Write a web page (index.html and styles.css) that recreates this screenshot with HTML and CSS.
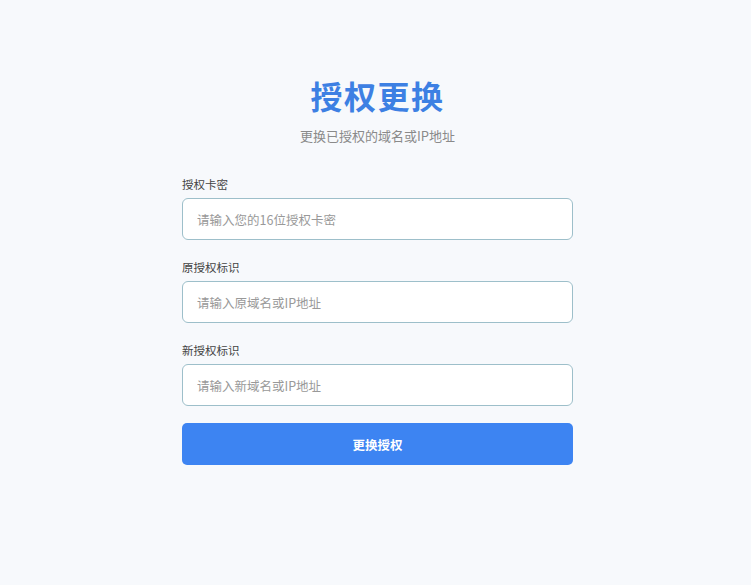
FILE: index.html
```html
<!DOCTYPE html>
<html lang="zh-CN">
<head>
<meta charset="utf-8">
<title>授权更换</title>
<link rel="stylesheet" href="styles.css">
</head>
<body>
<main class="page">
  <section class="card">
    <header class="head">
      <h1 class="title">授权更换</h1>
      <p class="subtitle">更换已授权的域名或IP地址</p>
    </header>
    <form class="form">
      <div class="field">
        <label class="label" for="key">授权卡密</label>
        <input class="input" id="key" type="text" placeholder="请输入您的16位授权卡密">
      </div>
      <div class="field">
        <label class="label" for="old">原授权标识</label>
        <input class="input" id="old" type="text" placeholder="请输入原域名或IP地址">
      </div>
      <div class="field">
        <label class="label" for="new">新授权标识</label>
        <input class="input" id="new" type="text" placeholder="请输入新域名或IP地址">
      </div>
      <button class="submit" type="button">更换授权</button>
    </form>
  </section>
</main>
</body>
</html>
```

FILE: styles.css
```css
* { box-sizing: border-box; }

html, body {
  margin: 0;
  padding: 0;
  background: #f7f9fc;
  font-family: "Noto Sans CJK SC", "Noto Sans", sans-serif;
  color: #333;
}

.page {
  display: flex;
  justify-content: center;
  padding: 74px 0 0 4px;
}

.card {
  width: 391px;
}

.head {
  text-align: center;
}

.title {
  margin: 0;
  font-size: 32px;
  line-height: 42px;
  font-weight: 700;
  color: #3d80e3;
  letter-spacing: 1.5px;
}

.subtitle {
  margin: 10px 0 0;
  font-size: 13px;
  line-height: 20px;
  color: #8a8a8a;
}

.form {
  margin-top: 28px;
  display: flex;
  flex-direction: column;
}

.field {
  display: flex;
  flex-direction: column;
  margin-bottom: 17px;
}

.label {
  font-size: 11.5px;
  line-height: 20px;
  color: #444;
  margin-bottom: 4px;
}

.input {
  height: 42px;
  width: 100%;
  padding: 0 14px;
  border: 1.5px solid #9dbfca;
  border-radius: 6px;
  background: #fff;
  font-family: inherit;
  font-size: 12.5px;
  color: #333;
  outline: none;
}

.input::placeholder {
  color: #999;
}

.submit {
  height: 42px;
  width: 100%;
  border: none;
  border-radius: 5px;
  background: #3d84f2;
  color: #fff;
  font-family: inherit;
  font-size: 12.5px;
  font-weight: 700;
  cursor: pointer;
}
```
